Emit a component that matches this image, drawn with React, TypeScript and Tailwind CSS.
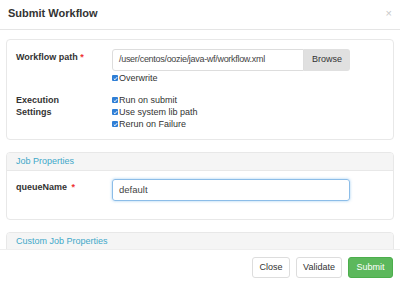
import React from "react";

function Check({ label }: { label: string }) {
  return (
    <div className="flex items-center h-[12px]">
      <span className="w-[6px] h-[6px] rounded-[1px] bg-[#2f7fd6] flex items-center justify-center mr-[1px]">
        <svg width="5" height="5" viewBox="0 0 6 6">
          <path d="M1 3.2 L2.4 4.5 L5 1.4" stroke="white" strokeWidth="1.2" fill="none" />
        </svg>
      </span>
      <span className="text-[9px] text-[#333] leading-[12px]">{label}</span>
    </div>
  );
}

export default function App() {
  return (
    <div
      className="w-[400px] h-[285px] bg-white flex flex-col overflow-hidden"
      style={{ fontFamily: '"Liberation Sans", Arial, sans-serif' }}
    >
      <div className="h-[30px] shrink-0 border-b border-[#e5e5e5] flex items-center justify-between pl-[8px] pr-[8px]">
        <span className="text-[11px] font-bold text-[#333] pb-[3px]">Submit Workflow</span>
        <span className="text-[11px] text-[#c8c8c8] pb-[3px]">×</span>
      </div>
      <div className="flex-1 overflow-hidden px-[6px] pt-[9px] flex flex-col gap-[12px]">
        <div className="shrink-0 h-[101px] border border-[#e8e8e8] rounded-[4px] px-[9px] pt-[9px]">
          <div className="grid grid-cols-[96px_1fr]">
            <div className="text-[9px] font-bold text-[#333] pt-[2px]">
              Workflow path <span className="text-[#e33]">*</span>
            </div>
            <div>
              <div className="flex h-[22px] w-[238px]">
                <div className="flex-1 border border-[#ddd] rounded-l-[3px] flex items-center px-[6px] text-[9px] tracking-[-0.3px] text-[#444] whitespace-nowrap overflow-hidden">
                  /user/centos/oozie/java-wf/workflow.xml
                </div>
                <div className="w-[46px] bg-[#e0e0e0] rounded-r-[3px] flex items-center justify-center text-[9px] text-[#333]">
                  Browse
                </div>
              </div>
              <div className="mt-[1px]">
                <Check label="Overwrite" />
              </div>
            </div>
          </div>
          <div className="grid grid-cols-[96px_1fr] mt-[10px]">
            <div className="text-[9px] font-bold text-[#333] leading-[12px]">
              Execution
              <br />
              Settings
            </div>
            <div>
              <Check label="Run on submit" />
              <Check label="Use system lib path" />
              <Check label="Rerun on Failure" />
            </div>
          </div>
        </div>

        <div className="shrink-0 h-[68px] border border-[#e8e8e8] rounded-[4px] overflow-hidden">
          <div className="h-[18px] bg-[#f5f5f5] border-b border-[#e8e8e8] flex items-center px-[9px] text-[9px] text-[#3fa8c9]">
            Job Properties
          </div>
          <div className="grid grid-cols-[96px_1fr] px-[9px] pt-[8px]">
            <div className="text-[9px] font-bold text-[#333] pt-[2px]">
              queueName <span className="text-[#e33] ml-[2px]">*</span>
            </div>
            <div className="h-[22px] w-[238px] border border-[#8cbde8] rounded-[3px] shadow-[0_0_3px_rgba(102,175,233,0.6)] flex items-center px-[6px] text-[9.5px] text-[#444]">
              default
            </div>
          </div>
        </div>

        <div className="shrink-0 h-[40px] border border-[#e8e8e8] rounded-[4px] overflow-hidden">
          <div className="h-[18px] bg-[#f5f5f5] border-b border-[#e8e8e8] flex items-center px-[9px] text-[9px] text-[#3fa8c9]">
            Custom Job Properties
          </div>
        </div>
      </div>
      <div className="h-[36px] shrink-0 border-t border-[#eee] bg-white flex items-center justify-end gap-[6px] pr-[7px]">
        <div className="h-[21px] w-[38px] border border-[#ddd] rounded-[3px] flex items-center justify-center text-[9px] text-[#333]">Close</div>
        <div className="h-[21px] w-[46px] border border-[#ddd] rounded-[3px] flex items-center justify-center text-[9px] text-[#333]">Validate</div>
        <div className="h-[21px] w-[45px] bg-[#5cb85c] border border-[#4cae4c] rounded-[3px] flex items-center justify-center text-[9px] text-white">Submit</div>
      </div>
    </div>
  );
}
